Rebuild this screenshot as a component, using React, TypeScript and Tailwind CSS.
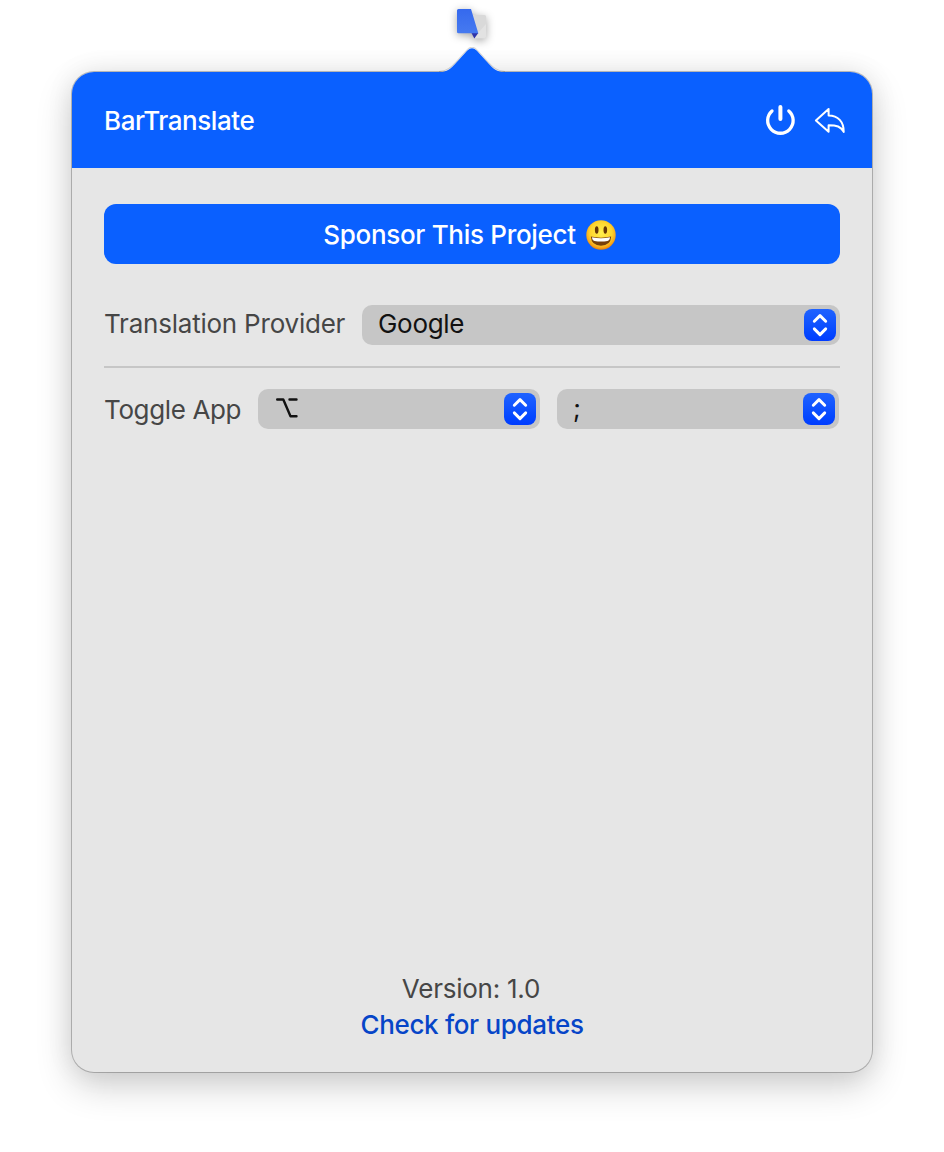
import type { ReactNode } from "react";

function TranslateIcon() {
  return (
    <svg
      className="absolute left-[385px] top-[-63px] h-[31px] w-[32px] overflow-visible drop-shadow-[0_2px_4px_rgba(0,0,0,0.35)]"
      viewBox="0 0 32 31"
      aria-hidden="true"
    >
      <defs>
        <linearGradient id="page" x1="0" y1="0" x2="0" y2="1">
          <stop offset="0" stopColor="#3569ee" />
          <stop offset="1" stopColor="#467af0" />
        </linearGradient>
      </defs>
      <path d="M14 6h13.200a2 2 0 0 1 2 2v19.200a2 2 0 0 1-2 2H17z" fill="#d9d9d9" />
      <path d="M21 24l8-9v12.500a1.700 1.700 0 0 1-1.700 1.700H17z" fill="#e2e2e2" />
      <path d="M14.500 24H21.300L17.300 29.500z" fill="#2f35aa" />
      <path d="M1.500 0H14l7.300 24.200H1.500A1.500 1.500 0 0 1 0 22.700V1.500A1.500 1.500 0 0 1 1.500 0z" fill="url(#page)" />
    </svg>
  );
}

function Pointer() {
  return (
    <svg className="absolute left-[367px] top-[-25px] h-[26px] w-[66px]" viewBox="0 0 64 26" preserveAspectRatio="none" aria-hidden="true">
      <path
        d="M0 25.500C8 25 11.500 21.500 16 16.500L27.500 3.500Q32-1 36.500 3.500L48 16.500C52.500 21.500 56 25 64 25.500V26H0z"
        fill="#0a60ff"
      />
      <path
        d="M0 24.500C8 24 11.500 20.500 16 15.500L27.500 2.500Q32-2 36.500 2.500L48 15.500C52.500 20.500 56 24 64 24.500"
        fill="none"
        stroke="#000"
        strokeOpacity=".16"
      />
    </svg>
  );
}

function PowerIcon() {
  return (
    <svg className="h-8 w-8" viewBox="0 0 32 32" fill="none" stroke="#fff" strokeLinecap="round" aria-hidden="true">
      <path d="M8 6.900A12.750 12.750 0 1 0 24.800 6.900" strokeWidth="3.300" />
      <path d="M16.400 3V15" strokeWidth="4" />
    </svg>
  );
}

function BackIcon() {
  return (
    <svg className="h-8 w-8" viewBox="0 0 32 32" fill="none" stroke="#fff" strokeWidth="2" strokeLinejoin="round" aria-hidden="true">
      <path d="M1.900 16.400L14.600 5V11.500C24 11.500 29.900 17.800 29.700 27.900C27 22.500 22.500 21.200 14.600 21.200V27.700z" />
    </svg>
  );
}

function Smiley() {
  return (
    <svg className="h-[30px] w-[30px]" viewBox="0 0 30 30" role="img" aria-label="Grinning face">
      <defs>
        <radialGradient id="face" cx=".5" cy=".42" r=".58">
          <stop offset="0" stopColor="#fff04f" />
          <stop offset=".65" stopColor="#ffd42c" />
          <stop offset=".88" stopColor="#f8a61a" />
          <stop offset="1" stopColor="#e97d0b" />
        </radialGradient>
      </defs>
      <circle cx="15" cy="15" r="14.700" fill="url(#face)" />
      <ellipse cx="10.700" cy="10" rx="1.800" ry="3.700" fill="#663605" />
      <ellipse cx="19.300" cy="10" rx="1.800" ry="3.700" fill="#663605" />
      <path d="M4.800 16.500Q15 18.800 25.200 16.500Q24.500 25.700 15 25.700T4.800 16.500z" fill="#77400a" />
      <path d="M6 17.300Q15 19.200 24 17.300Q23.800 20.500 21.500 21Q15 22 8.500 21Q6.200 20.500 6 17.300z" fill="#fff" />
    </svg>
  );
}

function OptionKey() {
  return (
    <svg className="h-5 w-[22px]" viewBox="0 0 22 20" fill="none" stroke="#111" strokeWidth="2.400" strokeLinecap="round" strokeLinejoin="round" role="img" aria-label="Option">
      <path d="M1.200 1.500H7.300L14.500 18.200H20.500M13.500 1.500H20.500" />
    </svg>
  );
}

function Select({ className, children }: { className: string; children: ReactNode }) {
  return (
    <button type="button" className={`flex h-10 items-center justify-between rounded-[10px] bg-[#c6c6c6] pl-4 pr-1 text-[#111] ${className}`}>
      {children}
      <span className="flex h-8 w-8 items-center justify-center rounded-[8px] bg-linear-to-b from-[#1f62ff] to-[#003cff]">
        <svg className="h-8 w-8" viewBox="0 0 32 32" fill="none" stroke="#fff" strokeWidth="2.900" strokeLinecap="round" strokeLinejoin="round" aria-hidden="true">
          <path d="M10.300 12.300L16 6.600L21.700 12.300M10.300 19.900L16 25.600L21.700 19.900" />
        </svg>
      </span>
    </button>
  );
}

export default function App() {
  return (
    <div className="flex h-[1152px] w-[944px] items-start justify-center overflow-hidden bg-white pt-[72px] font-['Inter',sans-serif] text-[26px] leading-9 text-[#464646]">
      <main className="relative flex h-[1000px] w-[800px] flex-col rounded-[22px] bg-[#e6e6e6] shadow-[0_0_0_1px_rgba(0,0,0,0.23),0_14px_36px_rgba(0,0,0,0.19),0_0_28px_rgba(0,0,0,0.08)]">
        <TranslateIcon />
        <Pointer />
        <header className="flex h-24 shrink-0 items-center justify-between rounded-t-[22px] bg-[#0a60ff] pl-8 pr-[26px] text-white">
          <h1 className="pt-[2px] font-medium tracking-[-0.43px]">BarTranslate</h1>
          <div className="flex items-center gap-[18px]">
            <button type="button" aria-label="Quit"><PowerIcon /></button>
            <button type="button" aria-label="Back"><BackIcon /></button>
          </div>
        </header>
        <div className="flex flex-1 flex-col px-8 pt-9">
          <button type="button" className="flex h-[60px] items-center justify-center gap-[10px] rounded-[12px] bg-[#0a60ff] pr-[5px] pt-[2px] font-medium text-white">
            <span className="tracking-[-0.31px]">Sponsor This Project</span>
            <Smiley />
          </button>
          <div className="mt-[41px] flex h-10 items-center justify-between">
            <span className="whitespace-nowrap pb-[2px] tracking-[-0.22px]">Translation Provider</span>
            <Select className="w-[478px]"><span className="pb-[2px] tracking-[-0.3px]">Google</span></Select>
          </div>
          <hr className="mt-[21px] border-t-2 border-[#c6c6c6]" />
          <div className="mt-[21px] flex h-10 items-center">
            <span className="w-[154px] whitespace-nowrap pt-[2px] tracking-[-0.36px]">Toggle App</span>
            <Select className="w-[282px]"><span className="flex pb-[2px] pl-[2px]"><OptionKey /></span></Select>
            <Select className="ml-[17px] w-[282px]"><span className="pb-[2px]">;</span></Select>
          </div>
          <footer className="mt-auto pb-[29px] text-center">
            <p className="pr-[2px] tracking-[-0.24px]">Version: 1.0</p>
            <a className="block font-medium tracking-[-0.33px] text-[#0645c8]" href="#updates">Check for updates</a>
          </footer>
        </div>
      </main>
    </div>
  );
}
